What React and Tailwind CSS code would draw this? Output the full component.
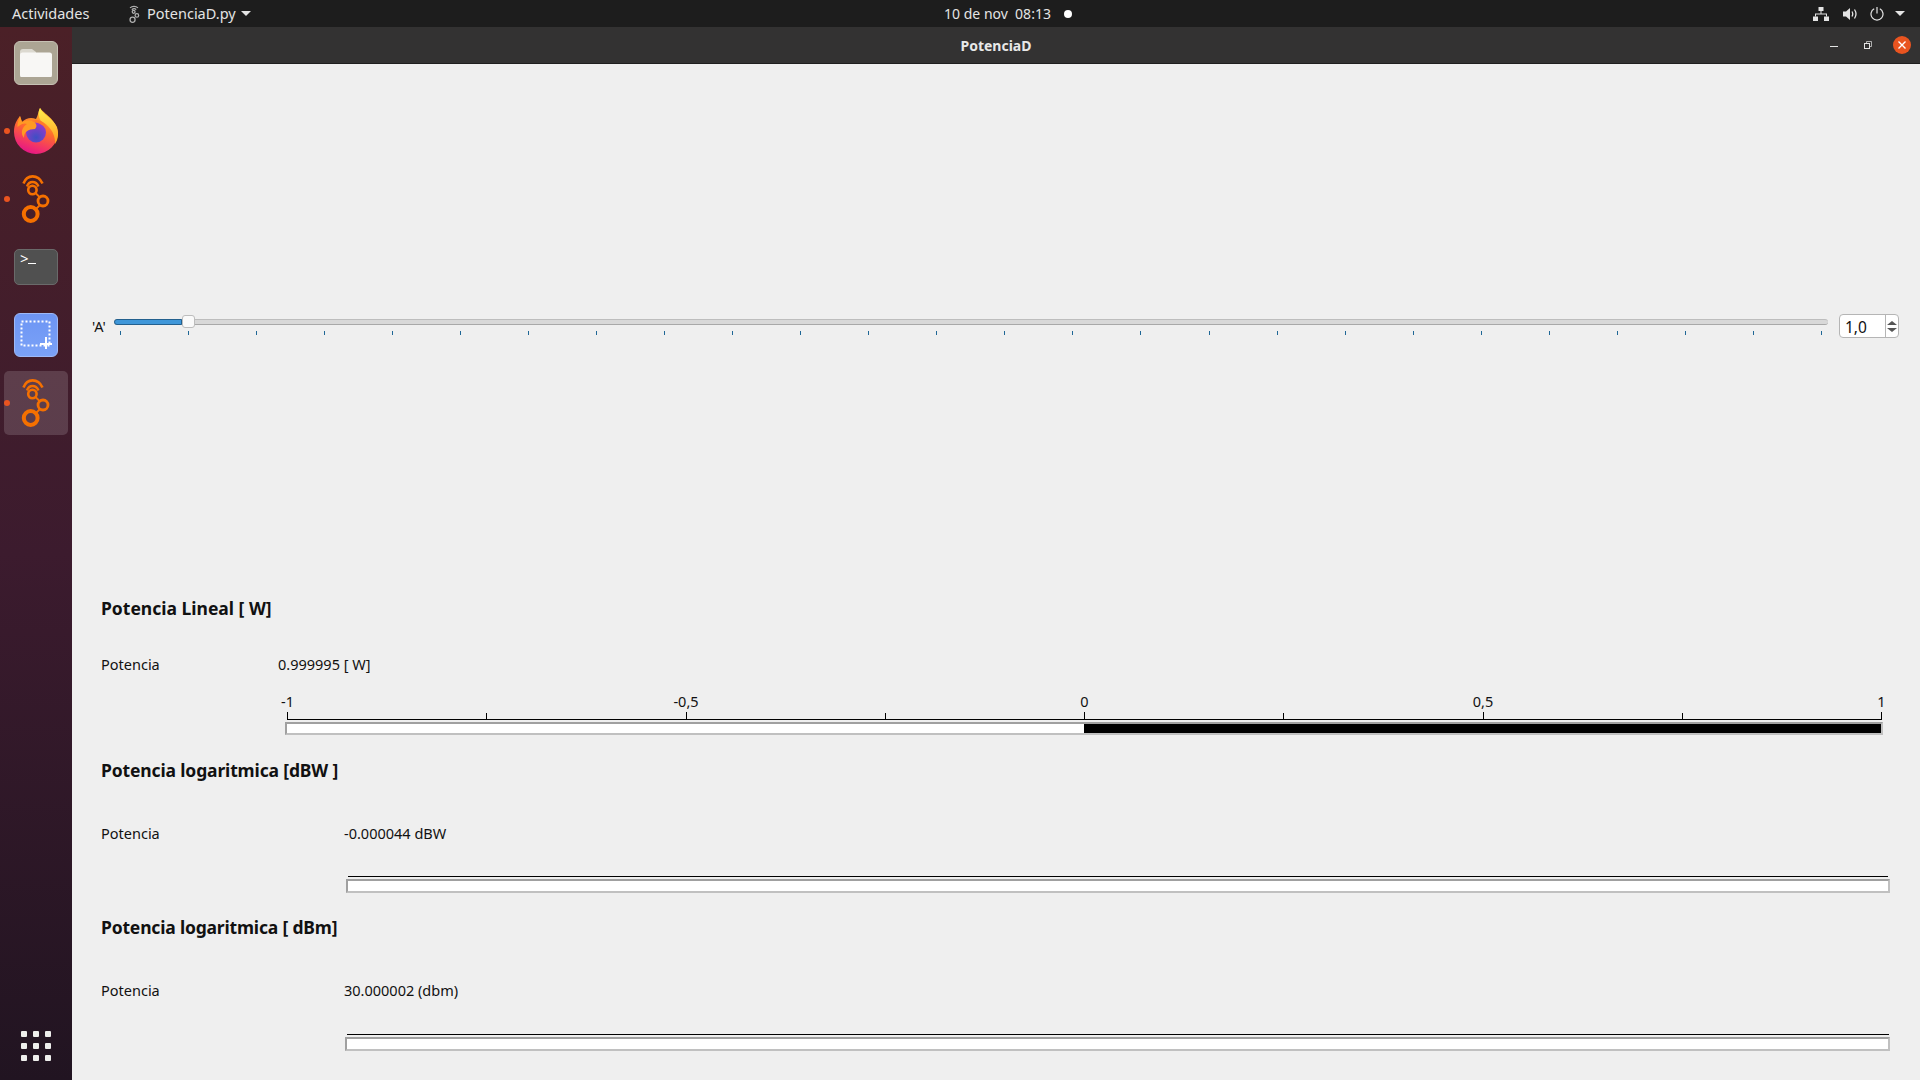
const sliderTicks = Array.from({ length: 26 }, (_, i) => i);
const rulerTicks = [
  { label: '-1' },
  {},
  { label: '-0,5' },
  {},
  { label: '0' },
  {},
  { label: '0,5' },
  {},
  { label: '1' },
];

// icono de la app (antena + anillos), coordenadas del dock
const AppLogo = () => (
  <svg width="30" height="50" viewBox="22 174 30 50" fill="none" stroke="#f57000">
    <path d="M24.5 183.5 C28 174 39 174 43.5 183.5" strokeWidth="2.6" />
    <path d="M28 186.5 C30 180.5 37 180.5 39.5 186.5" strokeWidth="2.4" />
    <circle cx="33.4" cy="190" r="4.2" strokeWidth="2.6" />
    <circle cx="44" cy="201" r="5" strokeWidth="2.8" />
    <circle cx="31.7" cy="214" r="6.9" strokeWidth="4" />
    <path d="M36.5 193 L40.5 197 M40.5 205.5 L37 209" strokeWidth="1.8" />
  </svg>
);

const FilesIcon = () => (
  <div className="w-[44px] h-[44px] rounded-[6px] bg-[#aca594] border border-[#c6c1b4] flex items-center justify-center">
    <svg width="32" height="28" viewBox="0 0 32 28">
      <path d="M0 3 Q0 0 3 0 H12 L16 3 V10 H0 Z" fill="#dcd9d0" />
      <rect x="0" y="3.5" width="32" height="25" rx="2.5" fill="#f8f7f5" />
    </svg>
  </div>
);

const FirefoxIcon = () => (
  <svg width="44" height="46" viewBox="0 0 44 46">
    <defs>
      <linearGradient id="ffBody" x1="0.7" y1="0.05" x2="0.35" y2="1">
        <stop offset="0" stopColor="#ffc02e" />
        <stop offset="0.45" stopColor="#ff6b2c" />
        <stop offset="0.8" stopColor="#f2316a" />
        <stop offset="1" stopColor="#e31587" />
      </linearGradient>
      <linearGradient id="ffFlame" x1="0.5" y1="0" x2="0.5" y2="1">
        <stop offset="0" stopColor="#fff04f" />
        <stop offset="1" stopColor="#ff9a1f" />
      </linearGradient>
      <radialGradient id="ffGlobe" cx="0.5" cy="0.75" r="0.8">
        <stop offset="0" stopColor="#3d4fc4" />
        <stop offset="1" stopColor="#a536c9" />
      </radialGradient>
    </defs>
    <path d="M26 0 C30 6 41 10 44 24 A22 22 0 0 1 0 24 C0 16 3 12 6 8 L8 14 C12 10 17 9 22 11 C24 8 24 4 26 0 Z" fill="url(#ffBody)" />
    <path d="M26 0 C29 7 39 10 43 19 C45 26 44 32 41 36 C42 26 35 17 27 13 C24 9 24 4 26 0 Z" fill="url(#ffFlame)" />
    <circle cx="22" cy="24.5" r="10" fill="url(#ffGlobe)" />
    <path d="M6 8 C5 12 3 15 3.5 19 C8 15 11 15 13 16 C8 19 6 25 10 30 C10 24 14 21 21 21 C24 18 22 14 18 13 C14 12 9 13 8 14 Z" fill="#ff9a24" />
    <path d="M18 13 C24 10 32 14 33 22 C30 17 25 15 18 13 Z" fill="#ff7a2a" />
  </svg>
);

const TerminalIcon = () => (
  <div className="w-[44px] h-[36px] rounded-[5px] bg-[#505050] border border-[#6a6a6a] relative">
    <span className="absolute left-[5px] top-[-1px] text-[15px] leading-[18px] text-white">&gt;</span>
    <span className="absolute left-[13px] top-[13px] w-[8px] h-[1px] bg-white"></span>
  </div>
);

const ScreenshotIcon = () => (
  <div className="w-[44px] h-[44px] rounded-[6px] bg-linear-to-b from-[#6d95f4] to-[#7ba2f7] border border-[#9db9f8] flex items-center justify-center">
    <svg width="32" height="30" viewBox="0 0 32 30">
      <rect x="1.5" y="1.5" width="28" height="24" fill="none" stroke="#fff" strokeWidth="2" strokeDasharray="2 2" />
      <path d="M26 17 V29 M20 24 H32" stroke="#fff" strokeWidth="2" />
    </svg>
  </div>
);

const DockItem = ({ running, active, children }) => (
  <div className={`relative w-[64px] h-[64px] my-[2px] rounded-[5px] flex items-center justify-center ${active ? 'bg-white/15' : ''}`}>
    {running && <span className="absolute left-0 top-[29px] w-[6px] h-[6px] rounded-full bg-[#e95420]"></span>}
    {children}
  </div>
);

const Dock = () => (
  <div className="w-[72px] h-full shrink-0 flex flex-col items-center pt-[2px] pb-[19px] bg-linear-to-b from-[#4b2027] via-[#3c1b2e] to-[#211421]">
    <DockItem><FilesIcon /></DockItem>
    <DockItem running><FirefoxIcon /></DockItem>
    <DockItem running><AppLogo /></DockItem>
    <DockItem><TerminalIcon /></DockItem>
    <DockItem><ScreenshotIcon /></DockItem>
    <DockItem running active><AppLogo /></DockItem>
    <div className="mt-auto grid grid-cols-3 gap-[6px]">
      {Array.from({ length: 9 }, (_, i) => (
        <span key={i} className="w-[6px] h-[6px] rounded-[1px] bg-[#eeeeec]"></span>
      ))}
    </div>
  </div>
);

const TopBar = () => (
  <div className="h-[27px] shrink-0 bg-[#1d1d1d] text-[#e4e4e4] text-[14.5px] grid grid-cols-[1fr_auto_1fr] items-center">
    <div className="flex items-center">
      <span className="ml-[12px] w-[116px]">Actividades</span>
      <svg width="12" height="18" viewBox="0 0 30 50" fill="none" stroke="#b0b0b0" strokeWidth="3.5">
        <path d="M4 8 C10 2 20 2 26 8 M9 13 C13 9 18 9 21 13" />
        <circle cx="14" cy="19" r="4" />
        <circle cx="23" cy="29" r="5" />
        <circle cx="11" cy="41" r="7" />
      </svg>
      <span className="ml-[7px]">PotenciaD.py</span>
      <span className="ml-[5px] w-0 h-0 border-x-[5px] border-x-transparent border-t-[5px] border-t-[#e4e4e4]"></span>
    </div>
    <div className="flex items-center pl-[96px] text-[14px]">
      <span>10 de nov&nbsp; 08:13</span>
      <span className="ml-[13px] w-[8px] h-[8px] rounded-full bg-white"></span>
    </div>
    <div className="flex items-center justify-end pr-[15px]">
      <svg width="16" height="14" viewBox="0 0 16 14" fill="#e4e4e4">
        <rect x="5.5" y="0" width="5" height="4" />
        <rect x="0" y="9.5" width="5" height="4.5" />
        <rect x="11" y="9.5" width="5" height="4.5" />
        <path d="M7.5 4 H8.5 V6.5 H14 V9.5 H13 V7.5 H3 V9.5 H2 V6.5 H7.5 Z" />
      </svg>
      <svg className="ml-[14px]" width="15" height="14" viewBox="0 0 15 14" fill="none">
        <path d="M0 4.5 H3 L7 1 V13 L3 9.5 H0 Z" fill="#e4e4e4" />
        <path d="M9 4.5 Q10.5 7 9 9.5 M11.5 2.5 Q14.5 7 11.5 11.5" stroke="#e4e4e4" strokeWidth="1.3" />
      </svg>
      <svg className="ml-[12px]" width="14" height="14" viewBox="0 0 14 14" fill="none" stroke="#e4e4e4" strokeWidth="1.2">
        <path d="M4.2 1.8 A6 6 0 1 0 9.8 1.8" />
        <path d="M7 0 V6.5" />
      </svg>
      <span className="ml-[11px] w-0 h-0 border-x-[5px] border-x-transparent border-t-[5px] border-t-[#e4e4e4]"></span>
    </div>
  </div>
);

const TitleBar = () => (
  <div className="h-[37px] shrink-0 bg-[#333232] border-b border-[#1f1f1f] relative flex items-center justify-center">
    <span className="text-[14px] font-bold text-[#e8e8e8]">PotenciaD</span>
    <div className="absolute right-[9px] top-[9px] flex items-center">
      <span className="w-[8px] h-[1px] bg-[#e4e4e4] mt-[3px]"></span>
      <svg className="ml-[26px]" width="8" height="8" viewBox="0 0 8 8" fill="none" stroke="#e4e4e4">
        <rect x="0.5" y="2.5" width="5" height="5" />
        <path d="M2.5 2.5 V0.5 H7.5 V5.5 H5.5" strokeWidth="0.7" />
      </svg>
      <span className="ml-[21px] w-[18px] h-[18px] rounded-full bg-[#e95420] flex items-center justify-center">
        <svg width="8" height="8" viewBox="0 0 8 8" stroke="#fff" strokeWidth="1.4">
          <path d="M0.5 0.5 L7.5 7.5 M7.5 0.5 L0.5 7.5" />
        </svg>
      </span>
    </div>
  </div>
);

const SliderRow = () => (
  <div className="mt-[250px] h-[24px] flex items-start shrink-0">
    <span className="ml-[20px] w-[22px] mt-[3px] text-[14.5px] leading-[18px] text-[#111]">'A'</span>
    <div className="w-[1714px] pt-[5px]">
      <div className="relative h-[6px] rounded-[3px] bg-[#d8d8d8] border-t border-t-[#bdbdbd] border-b border-b-[#a8a8a8]">
        <div className="absolute left-0 top-[-1px] w-[68px] h-[6px] rounded-l-[3px] bg-[#3f97d9] border border-[#23608e]"></div>
        <div className="absolute left-[68px] top-[-5px] w-[13px] h-[13px] rounded-[3px] bg-[#fafafa] border border-[#bdbdbd]"></div>
      </div>
      <div className="flex justify-between px-[6px] mt-[6px]">
        {sliderTicks.map((t) => (
          <span key={t} className="w-[1px] h-[4px] bg-[#1f6796]"></span>
        ))}
      </div>
    </div>
    <div className="ml-[11px] w-[60px] h-[24px] rounded-[4px] bg-white border border-[#b5b5b5] flex">
      <span className="flex-1 pl-[5px] text-[15.5px] leading-[24px] text-[#111]">1,0</span>
      <div className="w-[13px] border-l border-[#b5b5b5] flex flex-col items-center justify-center gap-[3px]">
        <span className="w-0 h-0 border-x-[5px] border-x-transparent border-b-[4px] border-b-[#555]"></span>
        <span className="w-0 h-0 border-x-[5px] border-x-transparent border-t-[4px] border-t-[#555]"></span>
      </div>
    </div>
  </div>
);

const Heading = ({ top, className = '', children }) => (
  <h2 className={`ml-[29px] h-[24px] leading-[24px] text-[17.5px] font-bold text-[#111] shrink-0 ${className}`} style={{ marginTop: top }}>
    {children}
  </h2>
);

const ValueRow = ({ top, labelWidth, children }) => (
  <div className="ml-[29px] h-[20px] mb-[-1px] flex items-center text-[14.5px] text-[#111] shrink-0" style={{ marginTop: top }}>
    <span style={{ width: labelWidth }}>Potencia</span>
    <span>{children}</span>
  </div>
);

const Bar = ({ left, width, height, filled }) => (
  <div
    className="bg-white border-2 border-t-[#a0a0a0] border-l-[#a0a0a0] border-r-[#c0c0c0] border-b-[#c0c0c0] flex justify-end shrink-0"
    style={{ marginLeft: left, width, height }}
  >
    {filled && <div className="bg-black h-full w-[797px]"></div>}
  </div>
);

const Ruler = () => (
  <div className="ml-[215px] w-[1595px] mt-[17px] shrink-0">
    <div className="flex justify-between">
      {rulerTicks.map((t, i) => (
        <div key={i} className="w-[1px] h-[28px] flex flex-col items-center justify-end">
          {t.label && <span className="h-[22px] leading-[20px] text-[14.5px] text-[#111] whitespace-nowrap">{t.label}</span>}
          <span className={`w-[1px] bg-black ${t.label ? 'h-[8px]' : 'h-[6px]'}`}></span>
        </div>
      ))}
    </div>
    <div className="h-[1px] bg-black"></div>
  </div>
);

const App = () => {
  return (
    <div className="w-[1920px] h-[1080px] overflow-hidden flex flex-col font-['Noto_Sans',sans-serif]">
      <TopBar />
      <div className="flex-1 flex min-h-0">
        <Dock />
        <div className="flex-1 flex flex-col min-w-0">
          <TitleBar />
          <div className="flex-1 flex flex-col bg-[#efefef]">
            <SliderRow />

            <Heading top="258px">Potencia Lineal [ W]</Heading>
            <ValueRow top="35px" labelWidth="177px">0.999995 [ W]</ValueRow>
            <Ruler />
            <div className="mt-[2px]">
              <Bar left="213px" width="1598px" height="13px" filled />
            </div>

            <Heading top="23px" className="tracking-[-0.14px]">Potencia logaritmica [dBW ]</Heading>
            <ValueRow top="42px" labelWidth="243px">-0.000044 dBW</ValueRow>
            <div className="ml-[276px] w-[1540px] h-[1px] bg-black mt-[33px] shrink-0"></div>
            <div className="mt-[2px]">
              <Bar left="274px" width="1544px" height="14px" />
            </div>

            <Heading top="22px" className="tracking-[-0.18px]">Potencia logaritmica [ dBm]</Heading>
            <ValueRow top="42px" labelWidth="243px">30.000002 (dbm)</ValueRow>
            <div className="ml-[275px] w-[1542px] h-[1px] bg-black mt-[34px] shrink-0"></div>
            <div className="mt-[2px]">
              <Bar left="273px" width="1545px" height="14px" />
            </div>
          </div>
        </div>
      </div>
    </div>
  );
};

export default App;
